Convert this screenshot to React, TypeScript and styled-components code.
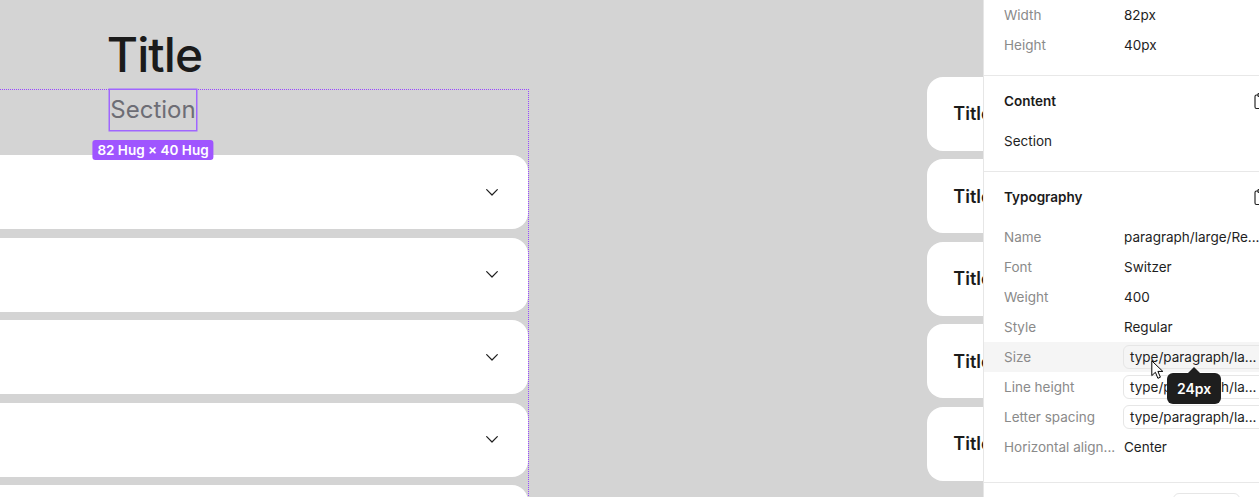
import React from "react";
import styled, { createGlobalStyle } from "styled-components";
import { Clipboard } from "lucide-react";

const Global = createGlobalStyle`
  html, body { margin: 0; padding: 0; overflow: hidden; background: #d4d4d4; }
  body { font-family: Inter, "Noto Sans", sans-serif; }
  * { box-sizing: border-box; }
`;

const Shell = styled.div`
  display: flex;
  width: 100vw;
  height: 497px;
  overflow: hidden;
`;

const Canvas = styled.main`
  flex: 0 0 983px;
  position: relative;
  overflow: hidden;
  background: #d4d4d4;
`;

const LeftGroup = styled.div`
  position: absolute;
  left: -222px;
  top: 29px;
  width: 751px;
  display: flex;
  flex-direction: column;
  align-items: center;
`;

const RightGroup = styled.div`
  position: absolute;
  left: 927.3px;
  top: 76.7px;
  width: 600px;
  display: flex;
  flex-direction: column;
  gap: 8.5px;
`;

const Title = styled.h1`
  margin: 0 0 0 2px;
  font-size: 48px;
  line-height: 52px;
  font-weight: 500;
  color: #1b1b1b;
  letter-spacing: -0.02em;
`;

const Frame = styled.div`
  margin-top: 8px;
  align-self: stretch;
  padding: 1px 1px 0 0;
  background-image: repeating-linear-gradient(90deg, #9747ff 0 1px, transparent 1px 2px),
    repeating-linear-gradient(180deg, #9747ff 0 1px, transparent 1px 2px);
  background-size: 100% 1px, 1px 100%;
  background-position: left top, right top;
  background-repeat: no-repeat;
  display: flex;
  flex-direction: column;
  align-items: center;
`;

const Selected = styled.div`
  position: relative;
  height: 40px;
  line-height: 40px;
  font-size: 24px;
  color: #6d6d75;
  box-shadow: 0 0 0 1.5px #a066ff;
`;

const SizeBadge = styled.span`
  position: absolute;
  top: calc(100% + 10px);
  left: 50%;
  transform: translateX(-50%);
  height: 20px;
  padding: 0 5px;
  border-radius: 3px;
  background: #9f55ff;
  color: #fff;
  font-size: 13.5px;
  font-weight: 600;
  line-height: 20px;
  white-space: nowrap;
`;

const CardList = styled.div`
  align-self: stretch;
  margin-top: 25px;
  display: flex;
  flex-direction: column;
  gap: 8.5px;
`;

const Card = styled.div<{ $side: "left" | "right" }>`
  height: 74px;
  border-radius: 16px;
  background: #fff;
  display: flex;
  align-items: center;
  justify-content: ${(p) => (p.$side === "left" ? "flex-end" : "flex-start")};
  padding: ${(p) => (p.$side === "left" ? "0 30px 0 0" : "0 0 0 26px")};
  font-size: 18px;
  font-weight: 600;
  color: #1b1b1b;
`;

const Panel = styled.aside`
  flex: 0 0 300px;
  background: #fff;
  border-left: 1px solid #e6e6e6;
  display: flex;
  flex-direction: column;
  font-size: 13.5px;
  color: #1e1e1e;
`;

const Group = styled.section<{ $pt: number; $pb: number; $border?: boolean }>`
  padding: ${(p) => p.$pt}px 0 ${(p) => p.$pb}px;
  border-top: ${(p) => (p.$border ? "1px solid #e8e8e8" : "none")};
  display: flex;
  flex-direction: column;
`;

const Header = styled.div`
  height: 30px;
  margin-bottom: 10px;
  padding: 0 13px 0 20px;
  display: flex;
  align-items: center;
  justify-content: space-between;
  font-weight: 600;
  color: #1a1a1a;
`;

const Row = styled.div<{ $active?: boolean }>`
  height: 30px;
  padding-left: 20px;
  display: grid;
  grid-template-columns: 120px 1fr;
  align-items: center;
  background: ${(p) => (p.$active ? "#f5f5f5" : "transparent")};
`;

const TextRow = styled.div`
  height: 30px;
  padding-left: 20px;
  display: flex;
  align-items: center;
`;

const Label = styled.span`
  color: #8a8a8a;
  white-space: nowrap;
  overflow: hidden;
`;

const Value = styled.span`
  white-space: nowrap;
`;

const TokenInput = styled.div`
  position: relative;
  margin-left: -1px;
  width: 160px;
  height: 24px;
  padding: 0 6px;
  border: 1px solid #e6e6e6;
  border-radius: 6px;
  display: flex;
  align-items: center;
  white-space: nowrap;
`;

const Tooltip = styled.div`
  position: absolute;
  z-index: 10;
  left: 43px;
  top: 27px;
  width: 54px;
  height: 31px;
  border-radius: 6px;
  background: #1e1e1e;
  color: #fff;
  font-size: 14px;
  font-weight: 600;
  display: flex;
  align-items: center;
  justify-content: center;
  &::before {
    content: "";
    position: absolute;
    top: -6px;
    left: 50%;
    margin-left: -6px;
    border-left: 6px solid transparent;
    border-right: 6px solid transparent;
    border-bottom: 6px solid #1e1e1e;
  }
`;

const Pointer = styled.svg`
  position: absolute;
  z-index: 11;
  left: 27px;
  top: 14px;
`;

const FooterButton = styled.div`
  margin-left: 189px;
  width: 67px;
  height: 28px;
  border: 1px solid #e6e6e6;
  border-radius: 6px;
`;

const Chevron = () => (
  <svg width="12" height="7" viewBox="0 0 12 7" fill="none">
    <path d="M0.7 0.7 L6 6 L11.3 0.7" stroke="#1e1e1e" strokeWidth="1.2" strokeLinecap="round" strokeLinejoin="round" />
  </svg>
);

const typographyRows: { label: string; value: string; token?: boolean }[] = [
  { label: "Name", value: "paragraph/large/Re..." },
  { label: "Font", value: "Switzer" },
  { label: "Weight", value: "400" },
  { label: "Style", value: "Regular" },
  { label: "Size", value: "type/paragraph/la...", token: true },
  { label: "Line height", value: "type/paragraph/la...", token: true },
  { label: "Letter spacing", value: "type/paragraph/la...", token: true },
  { label: "Horizontal align...", value: "Center" },
];

export default function App() {
  return (
    <Shell>
      <Global />
      <Canvas>
        <LeftGroup>
          <Title>Title</Title>
          <Frame>
            <Selected>
              Section
              <SizeBadge>82 Hug × 40 Hug</SizeBadge>
            </Selected>
            <CardList>
              {[0, 1, 2, 3, 4].map((i) => (
                <Card key={i} $side="left">
                  <Chevron />
                </Card>
              ))}
            </CardList>
          </Frame>
        </LeftGroup>
        <RightGroup>
          {[0, 1, 2, 3, 4].map((i) => (
            <Card key={i} $side="right">
              Title
            </Card>
          ))}
        </RightGroup>
      </Canvas>
      <Panel>
        <Group $pt={0} $pb={15}>
          <Row>
            <Label>Width</Label>
            <Value>82px</Value>
          </Row>
          <Row>
            <Label>Height</Label>
            <Value>40px</Value>
          </Row>
        </Group>
        <Group $pt={10} $pb={15} $border>
          <Header>
            Content
            <Clipboard size={18} strokeWidth={1.5} color="#1e1e1e" />
          </Header>
          <TextRow>Section</TextRow>
        </Group>
        <Group $pt={10} $pb={20} $border>
          <Header>
            Typography
            <Clipboard size={18} strokeWidth={1.5} color="#1e1e1e" />
          </Header>
          {typographyRows.map((r) => (
            <Row key={r.label} $active={r.label === "Size"}>
              <Label>{r.label}</Label>
              {r.token ? (
                <TokenInput>
                  {r.value}
                  {r.label === "Size" && (
                    <>
                      <Pointer width="13" height="20" viewBox="0 0 13 20">
                        <path
                          d="M0.8 0.8 L0.8 15.6 L4.4 12.3 L6.9 18.3 L9.4 17.2 L6.9 11.4 L11.8 11.4 Z"
                          fill="#fff"
                          stroke="#000"
                          strokeWidth="1"
                          strokeLinejoin="round"
                        />
                      </Pointer>
                      <Tooltip>24px</Tooltip>
                    </>
                  )}
                </TokenInput>
              ) : (
                <Value>{r.value}</Value>
              )}
            </Row>
          ))}
        </Group>
        <Group $pt={10} $pb={0} $border>
          <FooterButton />
        </Group>
      </Panel>
    </Shell>
  );
}
